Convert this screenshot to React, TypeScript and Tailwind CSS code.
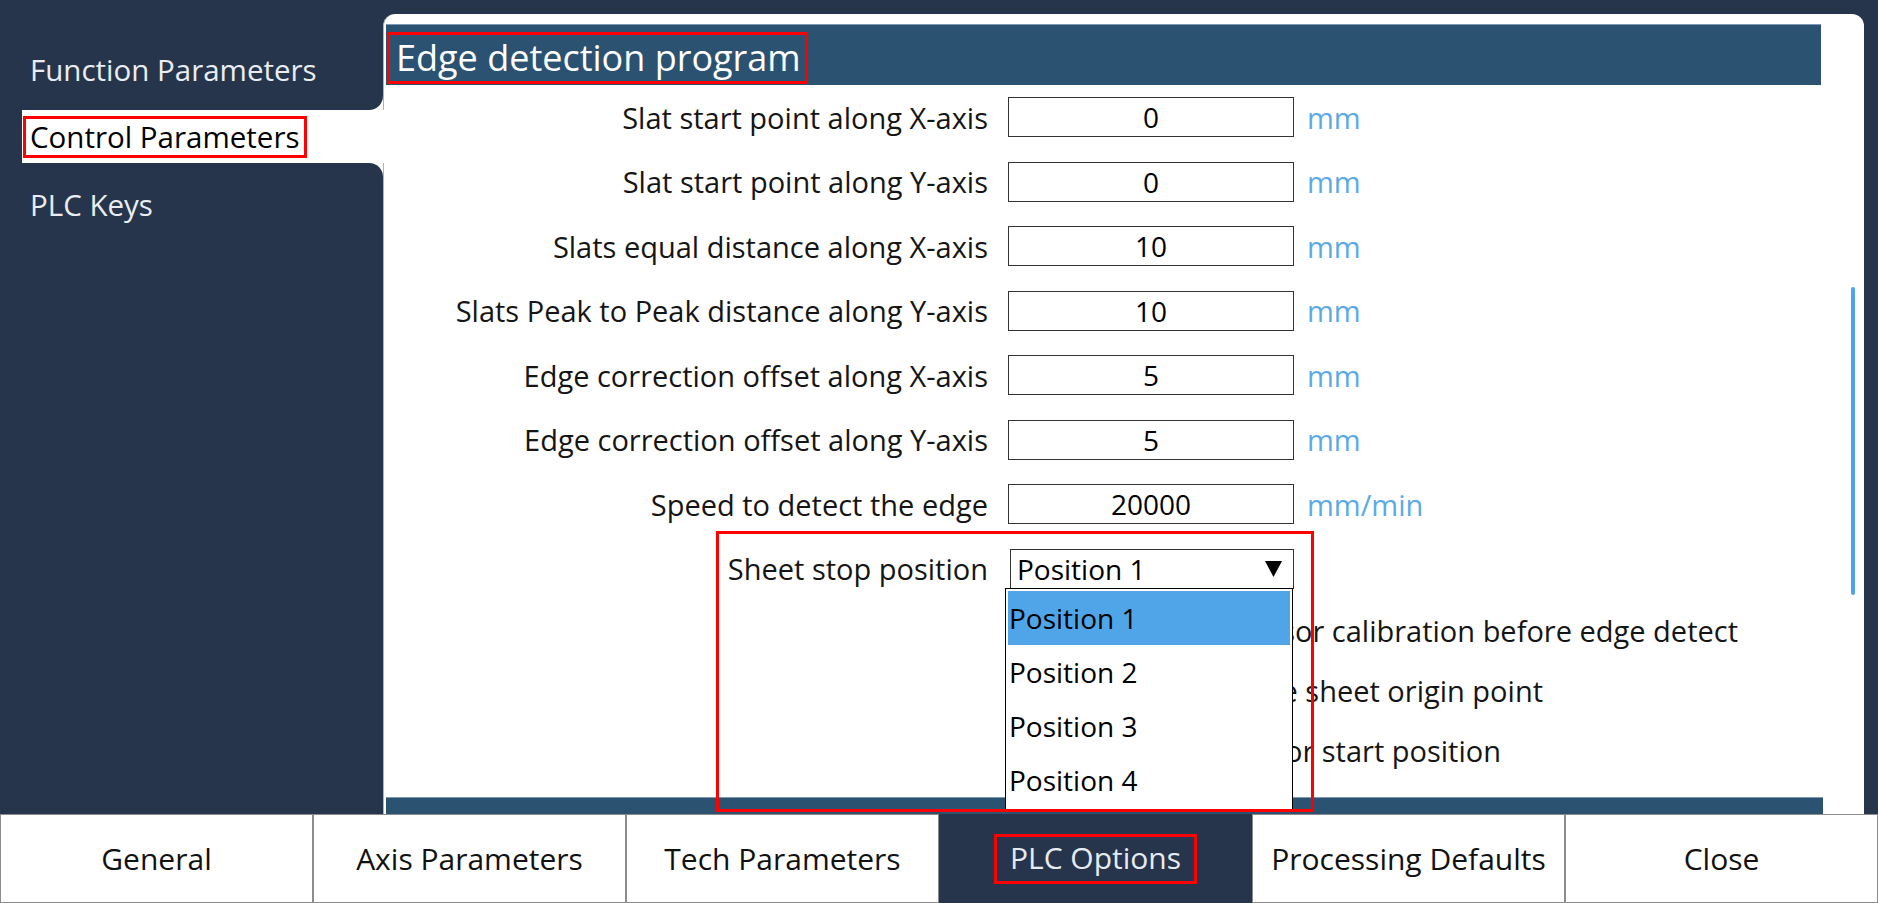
import React from "react";

const rows = [
  { label: "Slat start point along X-axis", value: "0", unit: "mm" },
  { label: "Slat start point along Y-axis", value: "0", unit: "mm" },
  { label: "Slats equal distance along X-axis", value: "10", unit: "mm" },
  { label: "Slats Peak to Peak distance along Y-axis", value: "10", unit: "mm" },
  { label: "Edge correction offset along X-axis", value: "5", unit: "mm" },
  { label: "Edge correction offset along Y-axis", value: "5", unit: "mm" },
  { label: "Speed to detect the edge", value: "20000", unit: "mm/min" },
];

const options = ["Position 1", "Position 2", "Position 3", "Position 4"];

const tabs = ["General", "Axis Parameters", "Tech Parameters", "PLC Options", "Processing Defaults", "Close"];

const Sidebar = () => {
  return (
    <div className="w-[383px] shrink-0 flex flex-col text-[29.5px]">
      <div className="bg-white">
        <div className="h-[110px] bg-[#26354c] rounded-br-[14px] flex items-center pt-[30px] pl-[30px] text-[#e9edf2]">
          Function Parameters
        </div>
      </div>
      <div className="h-[53px] ml-[22px] -mr-px relative z-10 bg-white flex items-center">
        <span className="ml-[1px] border-[3px] border-[#ff0000] pl-[4px] pr-[4px] leading-[36px] text-black">
          Control Parameters
        </span>
      </div>
      <div className="bg-white">
        <div className="h-[84px] bg-[#26354c] rounded-tr-[14px] flex items-center pl-[30px] text-[#e9edf2]">
          PLC Keys
        </div>
      </div>
    </div>
  );
};

const Row = ({ label, value, unit }: { label: string; value: string; unit: string }) => (
  <div className="flex items-center h-[64.5px]">
    <div className="w-[604px] text-right text-[#151515]">{label}</div>
    <div className="ml-[20px] w-[286px] h-[40px] border border-[#333] flex items-center justify-center text-black text-[28px]">
      {value}
    </div>
    <div className="ml-[13px] text-[#5aaae8]">{unit}</div>
  </div>
);

// lines partly hidden behind the open drop-down, right edge fixed
const hiddenLines = [
  { text: "Use sensor calibration before edge detect", w: "w-[1354px]" },
  { text: "Move to the sheet origin point", w: "w-[1159px]" },
  { text: "Move to sensor start position", w: "w-[1117px]" },
];

const Panel = () => {
  return (
    <div className="relative flex-1 mt-[14px] mr-[14px] bg-white rounded-t-[12px] border-l border-[#aab4c0] overflow-hidden text-[29px]">
      <div className="ml-[2px] mt-[10px] w-[1435px] h-[61px] bg-[#2c5272] border-t border-[#7d98b3] pt-[7px]">
        <span className="inline-block ml-[1px] h-[52px] border-[3px] border-[#ff0000] pl-[6px] pr-[4px] text-[36px] leading-[46px] text-white">
          Edge detection program
        </span>
      </div>

      {rows.map((r) => (
        <Row key={r.label} {...r} />
      ))}

      {/* sheet stop select, opened */}
      <div className="relative flex items-center h-[64.5px]">
        <div className="w-[604px] text-right text-[#151515]">Sheet stop position</div>
        <div className="relative ml-[22px] w-[284px] h-[40px] border border-[#333] flex items-center justify-between pl-[6px] pr-[11px] text-black text-[28px]">
          <span>Position 1</span>
          <svg width="17" height="16" viewBox="0 0 17 16">
            <polygon points="0,0 17,0 8.5,16" fill="#000" />
          </svg>
          <div className="absolute z-20 left-[-6px] top-[38px] w-[288px] bg-white border border-black p-[2px]">
            {options.map((o, i) => (
              <div
                key={o}
                className={`h-[54px] flex items-center pl-[1px] text-black ${i === 0 ? "bg-[#4fa5e8]" : ""}`}
              >
                {o}
              </div>
            ))}
          </div>
        </div>
        <div className="absolute z-30 left-[332px] top-[-6px] w-[598px] h-[281px] border-[3px] border-[#ff0000]" />
      </div>

      {hiddenLines.map((l) => (
        <div key={l.text} className="h-[60px] flex items-center">
          <div className={`${l.w} text-right whitespace-nowrap text-[#151515]`}>{l.text}</div>
        </div>
      ))}

      <div className="ml-[2px] mt-[16px] w-[1437px] h-[30px] bg-[#2c5272] border-t border-[#7d98b3]" />

      <div className="absolute right-[9px] top-[273px] h-[308px] w-[4px] rounded-full bg-[#4fa5ec]" />
    </div>
  );
};

const BottomBar = () => (
  <div className="grid grid-cols-6 h-[89px] text-[30px]">
    {tabs.map((t) =>
      t === "PLC Options" ? (
        <div key={t} className="bg-[#26354c] flex items-center justify-center text-[#e6ebf1]">
          <span className="h-[50px] border-[3px] border-[#ff0000] px-[13px] leading-[42px]">{t}</span>
        </div>
      ) : (
        <div key={t} className="bg-white border border-[#8c8c8c] flex items-center justify-center text-[#111]">
          {t}
        </div>
      )
    )}
  </div>
);

export default function App() {
  return (
    <div className="w-[1878px] h-[903px] bg-[#26354c] flex flex-col overflow-hidden font-['Open_Sans',sans-serif]">
      <div className="flex h-[814px] shrink-0">
        <Sidebar />
        <Panel />
      </div>
      <BottomBar />
    </div>
  );
}
